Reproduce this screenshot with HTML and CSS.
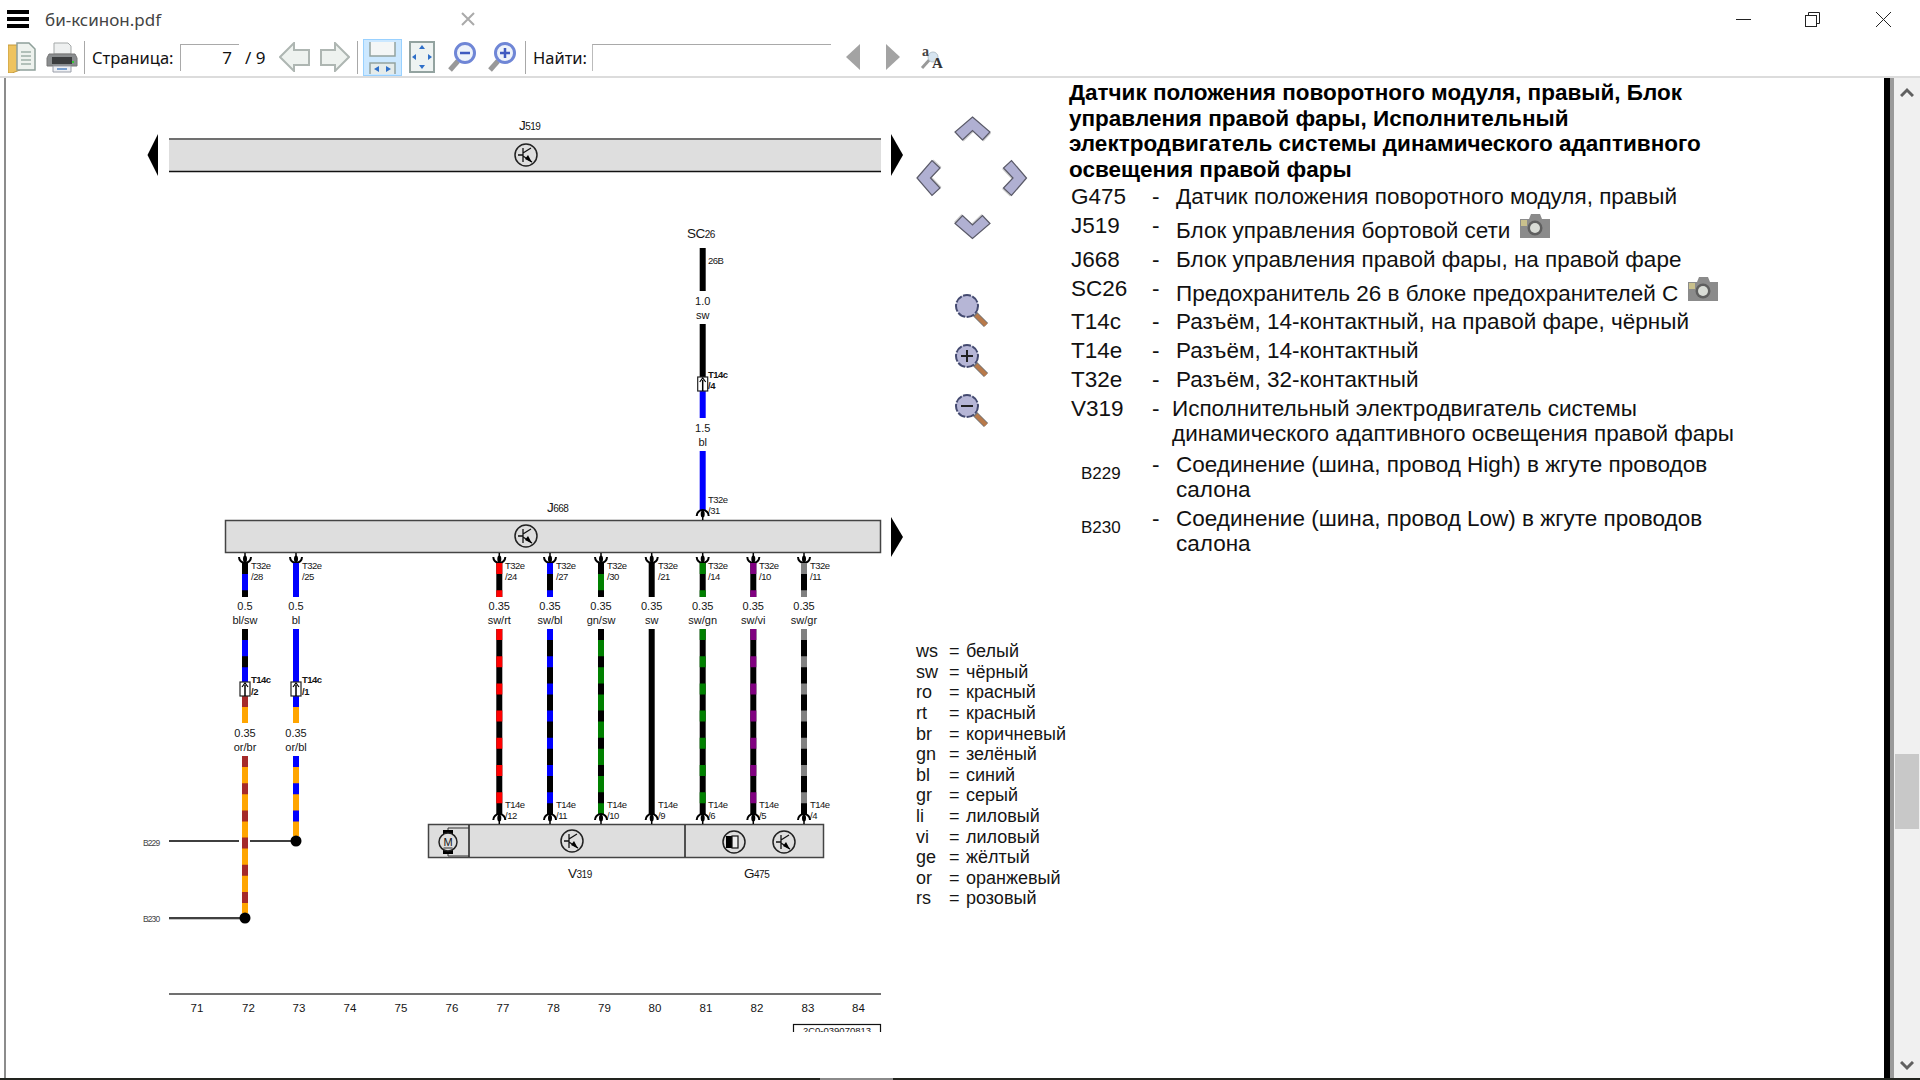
FILE: index.html
```html
<!DOCTYPE html>
<html lang="ru">
<head>
<meta charset="utf-8">
<title>би-ксинон.pdf</title>
<link rel="stylesheet" href="styles.css">
</head>
<body>
<div class="app">
  <header class="titlebar">
    <div class="burger"><span></span><span></span><span></span></div>
    <div class="doc-title">би-ксинон.pdf</div>
    <svg class="tab-close" width="14" height="14" viewBox="0 0 14 14"><path d="M1 1L13 13M13 1L1 13" stroke="#aaa" stroke-width="2"/></svg>
    <div class="win-btns">
      <svg width="15" height="15" viewBox="0 0 15 15"><path d="M0 7.5H15" stroke="#222"/></svg>
      <svg width="15" height="15" viewBox="0 0 15 15"><path d="M3.5 3.5V.5H14.5V11.5H11.5" fill="none" stroke="#222"/><rect x=".5" y="3.5" width="11" height="11" fill="#fff" stroke="#222"/></svg>
      <svg width="15" height="15" viewBox="0 0 15 15"><path d="M0 0L15 15M15 0L0 15" stroke="#222"/></svg>
    </div>
  </header>

  <nav class="toolbar">
    <svg class="ti ti-open" width="28" height="31" viewBox="0 0 28 31">
      <path d="M0 3H12V28L4 31H0Z" fill="#eec35f" stroke="#c49a3c"/>
      <path d="M9 1H21L27 7V28H9Z" fill="#eef2ee" stroke="#8fa09a" stroke-width="1.5"/>
      <path d="M13 10H23M13 14H23M13 18H23M13 22H23" stroke="#9fb0a8" stroke-width="1.5"/>
    </svg>
    <svg class="ti ti-print" width="32" height="31" viewBox="0 0 32 31">
      <path d="M8 1H22L25 4V12H8Z" fill="#eef0f0" stroke="#a5a9a9"/>
      <path d="M3 12H29L31 16V24H1V16Z" fill="#8a8d8f" stroke="#777"/>
      <rect x="6" y="15" width="20" height="7" fill="#3b3d3f"/>
      <rect x="26" y="19" width="2" height="2" fill="#3c3"/>
      <path d="M7 24H25V30H7Z" fill="#eef0f4" stroke="#9a9ea8"/>
      <path d="M11 27H21" stroke="#7aa0d0" stroke-width="2"/>
    </svg>
    <span class="tsep tsep-a"></span>
    <span class="tlabel tlabel-page">Страница:</span>
    <div class="tinput tinput-page">7</div>
    <span class="tcount">/ 9</span>
    <svg class="ti ti-prev" width="31" height="30" viewBox="0 0 31 30"><path d="M1 15L15 1V8H30V23H15V29Z" fill="#eef2ef" stroke="#aeb6b2" stroke-width="2"/></svg>
    <svg class="ti ti-next" width="30" height="30" viewBox="0 0 30 30"><path d="M29 15L15 1V8H1V23H15V29Z" fill="#eef2ef" stroke="#aeb6b2" stroke-width="2"/></svg>
    <span class="tsep tsep-b"></span>
    <div class="tactive">
      <svg width="27" height="33" viewBox="0 0 27 33">
        <path d="M1 1V15H26V1" fill="#f4f6f6" stroke="#93a3a0" stroke-width="1.5"/>
        <path d="M1 33V22H26V33" fill="#e4ebea" stroke="#93a3a0" stroke-width="1.5"/>
        <path d="M10 25L5 28L10 31ZM17 25L22 28L17 31Z" fill="#2f6fc8"/>
      </svg>
    </div>
    <svg class="ti ti-page" width="26" height="32" viewBox="0 0 26 32">
      <rect x="1" y="1" width="24" height="30" fill="#eef3f2" stroke="#93a3a0" stroke-width="2"/>
      <path d="M10 8L13 4L16 8ZM10 24L13 28L16 24ZM7 13L3 16L7 19ZM19 13L23 16L19 19Z" fill="#2f6fc8"/>
    </svg>
    <svg class="ti ti-zout" width="30" height="32" viewBox="0 0 30 32">
      <path d="M11 20L3 29" stroke="#999" stroke-width="5"/>
      <circle cx="18" cy="12" r="9.5" fill="#eef3fa" stroke="#6f86d6" stroke-width="3"/>
      <path d="M13 12H23" stroke="#3f5ac0" stroke-width="2.5"/>
    </svg>
    <svg class="ti ti-zin" width="30" height="32" viewBox="0 0 30 32">
      <path d="M11 20L3 29" stroke="#999" stroke-width="5"/>
      <circle cx="18" cy="12" r="9.5" fill="#eef3fa" stroke="#6f86d6" stroke-width="3"/>
      <path d="M13 12H23M18 7V17" stroke="#3f5ac0" stroke-width="2.5"/>
    </svg>
    <span class="tsep tsep-c"></span>
    <span class="tlabel tlabel-find">Найти:</span>
    <div class="tinput tinput-find"></div>
    <svg class="ti ti-fprev" width="14" height="26" viewBox="0 0 14 26"><path d="M14 0V26L0 13Z" fill="#a3a3a3"/></svg>
    <svg class="ti ti-fnext" width="14" height="26" viewBox="0 0 14 26"><path d="M0 0V26L14 13Z" fill="#a3a3a3"/></svg>
    <svg class="ti ti-font" width="28" height="32" viewBox="0 0 28 32">
      <path d="M2 27L11 17" stroke="#999" stroke-width="3"/>
      <circle cx="13" cy="16" r="5" fill="#d6e4f0" stroke="#b5c3cc"/>
      <text class="fa-small" x="2" y="15">a</text>
      <text class="fa-big" x="12" y="27">A</text>
    </svg>
  </nav>

  <main class="content">
    <div class="edge-left"></div>
    <svg class="diagram" width="1063" height="1000" viewBox="6 78 1063 1000">
      <defs>
        <g id="cupb"><path d="M0 0V8" class="stem"/><ellipse cx="0" cy="6" rx="2" ry="3.5"/><path d="M-6 4A6 6 0 0 0 6 4" class="arc"/></g>
        <g id="cupt"><path d="M0 0V-8" class="stem"/><ellipse cx="0" cy="-6" rx="2" ry="3.5"/><path d="M-6 -4A6 6 0 0 1 6 -4" class="arc"/></g>
        <g id="tr"><circle r="11" class="sym"/><path d="M-3 -7V7M-8 0H-3M-3 -2L5 -7M-3 1L6 7" class="symline"/><path d="M6 7.5L-1 4L2 0Z"/></g>
        <g id="plug"><rect x="-5" y="0" width="10" height="14" fill="#fff" stroke="#222" stroke-width="1.2"/><path d="M0 14V3" class="stem"/><path d="M-3 5L0 1L3 5" class="arc1"/></g>
        <g id="chev"><polygon points="0,-11.5 17.5,3.5 10,11.5 0,2 -10,11.5 -17.5,3.5" class="chev-shadow" transform="translate(1 1.5)"/><polygon points="0,-11.5 17.5,3.5 10,11.5 0,2 -10,11.5 -17.5,3.5" class="chev"/></g>
        <g id="mag"><path d="M8 8L19 19" class="mag-edge"/><path d="M9 9L19 19" class="mag-hand"/><circle r="11" class="lens"/></g>
        <clipPath id="stamp"><rect x="780" y="1020" width="110" height="12"/></clipPath>
      </defs>

      <!-- J519 -->
      <text class="ref" x="519" y="130">J<tspan class="sub">519</tspan></text>
      <rect x="169" y="138" width="712" height="34" class="bar"/>
      <path d="M169 139H881" class="bar-top"/>
      <path d="M169 171.5H881" class="bar-bot"/>
      <polygon points="158,134 158,176 147.500,155"/>
      <polygon points="891,134 891,176 903,155"/>
      <use href="#tr" x="526" y="155"/>

      <!-- SC26 -->
      <text class="ref" x="687" y="238">SC<tspan class="sub">26</tspan></text>
      <path d="M702.700 248V291M702.700 324V377" class="w k"/>
      <path d="M702.700 391V418M702.700 451V511" class="w b"/>
      <text class="sm" x="708" y="264">26B</text>
      <text class="md mid" x="702.700" y="305">1.0</text>
      <text class="md mid" x="702.700" y="319">sw</text>
      <use href="#plug" x="702.700" y="377"/>
      <text class="smb" x="708" y="378">T14c</text>
      <text class="smb" x="708" y="389">/4</text>
      <text class="md mid" x="702.700" y="432">1.5</text>
      <text class="md mid" x="702.700" y="446">bl</text>
      <text class="sm" x="708" y="503">T32e</text>
      <text class="sm" x="708" y="514">/31</text>

      <!-- J668 -->
      <text class="ref" x="547" y="512">J<tspan class="sub">668</tspan></text>
      <rect x="225.500" y="520.500" width="655" height="32" class="box"/>
      <polygon points="891,517 891,557 903,537"/>
      <use href="#tr" x="526" y="536"/>
      <use href="#cupt" x="702.700" y="520"/>
      <use href="#cupb" x="245" y="553"/><use href="#cupb" x="296" y="553"/>
      <use href="#cupb" x="499.300" y="553"/><use href="#cupb" x="550" y="553"/><use href="#cupb" x="601" y="553"/><use href="#cupb" x="651.700" y="553"/><use href="#cupb" x="702.700" y="553"/><use href="#cupb" x="753.300" y="553"/><use href="#cupb" x="804" y="553"/>

      <!-- wires -->
      <path d="M245 563V597M245 629V682M245 696V707" class="w b"/>
      <path d="M245 563V597M245 629V682" class="w k dash"/>
      <path d="M245 696V723M245 756V913" class="w o"/>
      <path d="M245 696V723M245 756V913" class="w br dash"/>
      <path d="M296 563V597M296 629V682" class="w b"/>
      <path d="M296 696V723M296 756V836" class="w o"/>
      <path d="M296 696V723M296 756V836" class="w b dash"/>

      <path d="M499.300 563V597M499.300 629V815" class="w k"/><path d="M499.300 563V597M499.300 629V815" class="w r dash"/>
      <path d="M550 563V597M550 629V815" class="w k"/><path d="M550 563V597M550 629V815" class="w b dash"/>
      <path d="M601 563V597M601 629V815" class="w g"/><path d="M601 563V597M601 629V815" class="w k dash"/>
      <path d="M651.700 563V597M651.700 629V815" class="w k"/>
      <path d="M702.700 563V597M702.700 629V815" class="w k"/><path d="M702.700 563V597M702.700 629V815" class="w g dash"/>
      <path d="M753.300 563V597M753.300 629V815" class="w k"/><path d="M753.300 563V597M753.300 629V815" class="w v dash"/>
      <path d="M804 563V597M804 629V815" class="w k"/><path d="M804 563V597M804 629V815" class="w gy dash"/>

      <!-- upper wire labels -->
      <g class="sm">
        <text x="251" y="569">T32e</text><text x="251" y="580">/28</text>
        <text x="302" y="569">T32e</text><text x="302" y="580">/25</text>
        <text x="505" y="569">T32e</text><text x="505" y="580">/24</text>
        <text x="556" y="569">T32e</text><text x="556" y="580">/27</text>
        <text x="607" y="569">T32e</text><text x="607" y="580">/30</text>
        <text x="658" y="569">T32e</text><text x="658" y="580">/21</text>
        <text x="708" y="569">T32e</text><text x="708" y="580">/14</text>
        <text x="759" y="569">T32e</text><text x="759" y="580">/10</text>
        <text x="810" y="569">T32e</text><text x="810" y="580">/11</text>
      </g>
      <g class="md mid">
        <text x="245" y="610">0.5</text><text x="245" y="624">bl/sw</text>
        <text x="296" y="610">0.5</text><text x="296" y="624">bl</text>
        <text x="499.300" y="610">0.35</text><text x="499.300" y="624">sw/rt</text>
        <text x="550" y="610">0.35</text><text x="550" y="624">sw/bl</text>
        <text x="601" y="610">0.35</text><text x="601" y="624">gn/sw</text>
        <text x="651.700" y="610">0.35</text><text x="651.700" y="624">sw</text>
        <text x="702.700" y="610">0.35</text><text x="702.700" y="624">sw/gn</text>
        <text x="753.300" y="610">0.35</text><text x="753.300" y="624">sw/vi</text>
        <text x="804" y="610">0.35</text><text x="804" y="624">sw/gr</text>
        <text x="245" y="737">0.35</text><text x="245" y="751">or/br</text>
        <text x="296" y="737">0.35</text><text x="296" y="751">or/bl</text>
      </g>
      <use href="#plug" x="245" y="682"/>
      <use href="#plug" x="296" y="682"/>
      <text class="smb" x="251" y="683">T14c</text><text class="smb" x="251" y="695">/2</text>
      <text class="smb" x="302" y="683">T14c</text><text class="smb" x="302" y="695">/1</text>

      <!-- buses -->
      <path d="M169 841H239M250 841H296" class="thin"/>
      <path d="M169 918H245" class="thin"/>
      <path d="M169 919.500H240" class="thin-shadow"/>
      <circle cx="296" cy="841" r="5.500"/>
      <circle cx="245" cy="918" r="5.500"/>
      <text class="tiny" x="143" y="846">B229</text>
      <text class="tiny" x="143" y="922">B230</text>

      <!-- V319 / G475 -->
      <rect x="428.500" y="824.500" width="395" height="33" class="box"/>
      <path d="M469 825V857M685 825V857" class="sep"/>
      <path d="M469 828H448V856H469" class="thin-gr"/>
      <rect x="443" y="830" width="10" height="4"/><rect x="443" y="850" width="10" height="4"/>
      <circle cx="448" cy="842" r="9" class="sym"/>
      <text class="motor mid" x="448" y="846">M</text>
      <path d="M443.500 848H452.500" class="hair"/>
      <use href="#tr" x="572" y="841"/>
      <g transform="translate(734 842)"><circle r="11" class="sym"/><rect x="-8" y="-6" width="6" height="12"/><rect x="-2" y="-6" width="6" height="12" fill="#eee" stroke="#111" stroke-width="1.2"/></g>
      <use href="#tr" x="784" y="842"/>
      <use href="#cupt" x="499.300" y="824"/><use href="#cupt" x="550" y="824"/><use href="#cupt" x="601" y="824"/><use href="#cupt" x="651.700" y="824"/><use href="#cupt" x="702.700" y="824"/><use href="#cupt" x="753.300" y="824"/><use href="#cupt" x="804" y="824"/>
      <g class="sm">
        <text x="505" y="808">T14e</text><text x="505" y="819">/12</text>
        <text x="556" y="808">T14e</text><text x="556" y="819">/11</text>
        <text x="607" y="808">T14e</text><text x="607" y="819">/10</text>
        <text x="658" y="808">T14e</text><text x="658" y="819">/9</text>
        <text x="708" y="808">T14e</text><text x="708" y="819">/6</text>
        <text x="759" y="808">T14e</text><text x="759" y="819">/5</text>
        <text x="810" y="808">T14e</text><text x="810" y="819">/4</text>
      </g>
      <text class="ref" x="568" y="878">V<tspan class="sub">319</tspan></text>
      <text class="ref" x="744" y="878">G<tspan class="sub">475</tspan></text>

      <!-- axis -->
      <path d="M169 994H881" class="axis"/>
      <g class="ax mid">
        <text x="197" y="1012">71</text><text x="248.500" y="1012">72</text><text x="299" y="1012">73</text><text x="350" y="1012">74</text><text x="401" y="1012">75</text><text x="452" y="1012">76</text><text x="503" y="1012">77</text><text x="553.500" y="1012">78</text><text x="604.500" y="1012">79</text><text x="655" y="1012">80</text><text x="706" y="1012">81</text><text x="757" y="1012">82</text><text x="808" y="1012">83</text><text x="858.500" y="1012">84</text>
      </g>
      <g clip-path="url(#stamp)">
        <rect x="793.500" y="1024.500" width="87" height="20" class="stamp"/>
        <text class="stamp-text mid" x="837" y="1033.500">2C0-039070813</text>
      </g>

      <!-- navigation -->
      <use href="#chev" transform="translate(972.500 128.500)"/>
      <use href="#chev" transform="translate(928.500 178) rotate(-90)"/>
      <use href="#chev" transform="translate(1015 178) rotate(90)"/>
      <use href="#chev" transform="translate(972.500 227) rotate(180)"/>
      <use href="#mag" x="967" y="306"/>
      <use href="#mag" x="967" y="356"/>
      <path d="M961 356H973M967 350V362" class="glass"/>
      <use href="#mag" x="967" y="406"/>
      <path d="M961 406H973" class="glass"/>

      <!-- legend -->
      <g class="leg">
        <text x="916" y="657">ws</text><text x="949" y="657">=</text><text x="966" y="657">белый</text>
        <text x="916" y="678">sw</text><text x="949" y="678">=</text><text x="966" y="678">чёрный</text>
        <text x="916" y="698">ro</text><text x="949" y="698">=</text><text x="966" y="698">красный</text>
        <text x="916" y="719">rt</text><text x="949" y="719">=</text><text x="966" y="719">красный</text>
        <text x="916" y="740">br</text><text x="949" y="740">=</text><text x="966" y="740">коричневый</text>
        <text x="916" y="760">gn</text><text x="949" y="760">=</text><text x="966" y="760">зелёный</text>
        <text x="916" y="781">bl</text><text x="949" y="781">=</text><text x="966" y="781">синий</text>
        <text x="916" y="801">gr</text><text x="949" y="801">=</text><text x="966" y="801">серый</text>
        <text x="916" y="822">li</text><text x="949" y="822">=</text><text x="966" y="822">лиловый</text>
        <text x="916" y="843">vi</text><text x="949" y="843">=</text><text x="966" y="843">лиловый</text>
        <text x="916" y="863">ge</text><text x="949" y="863">=</text><text x="966" y="863">жёлтый</text>
        <text x="916" y="884">or</text><text x="949" y="884">=</text><text x="966" y="884">оранжевый</text>
        <text x="916" y="904">rs</text><text x="949" y="904">=</text><text x="966" y="904">розовый</text>
      </g>
    </svg>

    <section class="notes">
      <h1 class="notes-title">Датчик положения поворотного модуля, правый, Блок управления правой фары, Исполнительный электродвигатель системы динамического адаптивного освещения правой фары</h1>
      <div class="legend-row"><span class="code">G475</span><span class="dash">-</span><span class="desc">Датчик положения поворотного модуля, правый</span></div>
      <div class="legend-row r-j519"><span class="code">J519</span><span class="dash">-</span><span class="desc">Блок управления бортовой сети
        <svg class="camera" width="30" height="25" viewBox="0 0 30 25"><path d="M0 6H9L11 1H20L22 6H30V25H0Z" fill="#8b8b8b"/><rect x="1" y="7" width="6" height="6" fill="#c9c08c"/><circle cx="15" cy="15" r="7.500" fill="#5f5f5f"/><circle cx="15" cy="15" r="5" fill="#d9dcd6"/></svg></span></div>
      <div class="legend-row"><span class="code">J668</span><span class="dash">-</span><span class="desc">Блок управления правой фары, на правой фаре</span></div>
      <div class="legend-row r-sc26"><span class="code">SC26</span><span class="dash">-</span><span class="desc">Предохранитель 26 в блоке предохранителей С
        <svg class="camera" width="30" height="25" viewBox="0 0 30 25"><path d="M0 6H9L11 1H20L22 6H30V25H0Z" fill="#8b8b8b"/><rect x="1" y="7" width="6" height="6" fill="#c9c08c"/><circle cx="15" cy="15" r="7.500" fill="#5f5f5f"/><circle cx="15" cy="15" r="5" fill="#d9dcd6"/></svg></span></div>
      <div class="legend-row"><span class="code">T14c</span><span class="dash">-</span><span class="desc">Разъём, 14-контактный, на правой фаре, чёрный</span></div>
      <div class="legend-row"><span class="code">T14e</span><span class="dash">-</span><span class="desc">Разъём, 14-контактный</span></div>
      <div class="legend-row"><span class="code">T32e</span><span class="dash">-</span><span class="desc">Разъём, 32-контактный</span></div>
      <div class="legend-row r-v319"><span class="code">V319</span><span class="dash">-</span><span class="desc">Исполнительный электродвигатель системы динамического адаптивного освещения правой фары</span></div>
      <div class="legend-row r-bus"><span class="code code-sm">B229</span><span class="dash">-</span><span class="desc">Соединение (шина, провод High) в жгуте проводов салона</span></div>
      <div class="legend-row r-bus"><span class="code code-sm">B230</span><span class="dash">-</span><span class="desc">Соединение (шина, провод Low) в жгуте проводов салона</span></div>
    </section>

    <div class="edge-right"></div>
    <aside class="scrollbar">
      <svg class="sb-up" width="14" height="10" viewBox="0 0 14 10"><path d="M1 9L7 3L13 9" fill="none" stroke="#606060" stroke-width="3"/></svg>
      <div class="sb-thumb"></div>
      <svg class="sb-down" width="14" height="10" viewBox="0 0 14 10"><path d="M1 1L7 7L13 1" fill="none" stroke="#606060" stroke-width="3"/></svg>
    </aside>
  </main>
  <footer class="bottom-strip"><span class="strip-mark"></span></footer>
</div>
</body>
</html>
```

FILE: styles.css
```css
* { box-sizing: border-box; }
html, body { margin: 0; height: 100%; background: #fff; overflow: hidden; }
.app { width: 1920px; height: 1080px; display: flex; flex-direction: column; font-family: "Liberation Sans", Arial, sans-serif; color: #000; }

/* title bar */
.titlebar { height: 38px; display: flex; align-items: center; padding-left: 7px; flex: none; }
.burger { width: 22px; height: 18px; display: flex; flex-direction: column; justify-content: space-between; }
.burger span { height: 4px; background: #000; display: block; }
.doc-title { margin-left: 16px; width: 416px; font: 17px "Noto Sans", sans-serif; color: #444; }
.tab-close { flex: none; margin-left: 0; }
.win-btns { margin-left: auto; margin-right: 29px; display: flex; gap: 54px; align-items: center; }
.win-btns svg:nth-child(2) { margin-right: 2px; }

/* toolbar */
.toolbar { height: 40px; flex: none; display: flex; align-items: center; padding-left: 8px; border-bottom: 2px solid #dcdcdc; font: 16.5px "Noto Sans", sans-serif; color: #111; }
.ti { flex: none; display: block; }
.ti-print { margin-left: 10px; }
.tsep { flex: none; width: 1px; height: 33px; background: #a8a8a8; }
.tsep-a { margin-left: 6px; }
.tlabel { flex: none; }
.tlabel-page { margin-left: 7px; width: 82px; }
.tinput { flex: none; height: 27px; border-top: 1px solid #a9a9a9; border-left: 1px solid #a9a9a9; }
.tinput-page { width: 59px; margin-left: 6px; text-align: right; padding-right: 7px; line-height: 26px; font-size: 17px; }
.tcount { flex: none; width: 34px; margin-left: 6px; font-size: 17px; }
.ti-prev { margin-left: 0; }
.ti-next { margin-left: 10px; }
.tsep-b { margin-left: 7px; }
.tactive { flex: none; margin-left: 5px; width: 39px; height: 37px; background: #cce8ff; border: 1px solid #99d1ff; display: flex; align-items: center; justify-content: center; }
.ti-page { margin-left: 7px; }
.ti-zout { margin-left: 12px; }
.ti-zin { margin-left: 10px; }
.tsep-c { margin-left: 8px; }
.tlabel-find { margin-left: 7px; width: 52px; }
.tinput-find { width: 239px; margin-left: 7px; border-left-color: #bbb; }
.ti-fprev { margin-left: 15px; }
.ti-fnext { margin-left: 26px; }
.ti-font { margin-left: 20px; }
.fa-small { font: bold 14px "Liberation Serif", serif; fill: #444; }
.fa-big { font: bold 15px "Liberation Serif", serif; fill: #333; }

/* content */
.content { flex: 1; min-height: 0; display: flex; }
.edge-left { flex: none; width: 6px; border-left: 4px solid #fff; background: #8c8c8c; }
.diagram { flex: none; display: block; }
.notes { flex: none; width: 815px; padding: 2px 0 0 0; }
.notes-title { margin: 0 0 1.300px; width: 680px; font-size: 22.500px; line-height: 25.600px; font-weight: bold; color: #000; }
.legend-row { display: grid; grid-template-columns: 81px 24px 570px; margin-left: 2px; font-size: 22.500px; line-height: 25.600px; color: #111; padding-bottom: 3.400px; align-items: start; }
.r-j519 { padding-bottom: 3.300px; }
.r-sc26 { padding-bottom: 2.600px; }
.r-v319 { padding-bottom: 5px; }
.r-v319 .desc { margin-left: -4px; width: 574px; }
.r-bus { padding-bottom: 2.800px; }
.code-sm { font-size: 17px; padding-left: 10px; padding-top: 9px; }
.camera { vertical-align: baseline; margin-left: 3px; }
.edge-right { flex: none; width: 10px; background: linear-gradient(90deg, #000 0 6px, #9a9a9a 6px 10px); }
.scrollbar { flex: none; width: 26px; background: #f0f0f0; display: flex; flex-direction: column; align-items: center; position: relative; }
.sb-up { margin-top: 9px; flex: none; }
.sb-thumb { flex: none; width: 24px; height: 75px; margin-top: 657px; background: #c8c8c8; }
.sb-down { flex: none; margin-top: auto; margin-bottom: 7px; }
.bottom-strip { height: 2px; flex: none; background: #22241f; position: relative; }
.strip-mark { position: absolute; left: 820px; width: 73px; top: 0; height: 2px; background: #8a8a8a; }

/* diagram drawing */
.diagram text { font-family: "Liberation Sans", Arial, sans-serif; fill: #151515; }
.ref { font-size: 13.500px; letter-spacing: -.5px; }
.sub { font-size: 10px; }
.sm text, text.sm { font-size: 9.500px; letter-spacing: -.5px; }
text.smb { font-size: 9.500px; font-weight: bold; letter-spacing: -.5px; }
.md text, text.md { font-size: 11px; }
.mid text, text.mid { text-anchor: middle; }
text.tiny { font-size: 8.500px; letter-spacing: -.9px; fill: #444; }
text.stamp-text { font-size: 9.500px; }
.ax text { font-size: 11.500px; }
.leg text { font-size: 18px; }
text.motor { font-size: 11px; }

.bar { fill: #dedede; }
.bar-top { stroke: #707070; stroke-width: 2; }
.bar-bot { stroke: #111; stroke-width: 1.500; }
.box { fill: #dedede; stroke: #444; stroke-width: 1.500; }
.sep { stroke: #222; stroke-width: 1.500; }
.thin { stroke: #000; stroke-width: 1.500; fill: none; }
.thin-shadow { stroke: #c4c4c4; stroke-width: 1; }
.thin-gr { stroke: #333; stroke-width: 1; fill: none; }
.hair { stroke: #333; stroke-width: 1; }
.axis { stroke: #707070; stroke-width: 2; }
.stamp { fill: none; stroke: #111; stroke-width: 1.200; }
.w { fill: none; stroke-width: 6; }
.dash { stroke-dasharray: 11 16.200; }
.k { stroke: #000; } .b { stroke: #00f; } .r { stroke: #f00; } .g { stroke: #008000; }
.o { stroke: #ffa500; } .br { stroke: #a52a2a; } .v { stroke: #800080; } .gy { stroke: #808080; }
.stem { stroke: #000; stroke-width: 1.500; fill: none; }
.arc { stroke: #000; stroke-width: 2; fill: none; }
.arc1 { stroke: #000; stroke-width: 1.200; fill: none; }
.sym { fill: #dedede; stroke: #222; stroke-width: 1.500; }
.symline { stroke: #111; stroke-width: 1.300; fill: none; }
.chev { fill: #b0b0d2; stroke: #5a5a68; stroke-width: 1.200; }
.chev-shadow { fill: #ccc; }
.lens { fill: #b6b6d6; stroke: #444a70; stroke-width: 2; stroke-dasharray: 8 1.500; }
.mag-edge { stroke: #777; stroke-width: 6; }
.mag-hand { stroke: #b8794a; stroke-width: 4; }
.glass { stroke: #222; stroke-width: 2; fill: none; }
```
